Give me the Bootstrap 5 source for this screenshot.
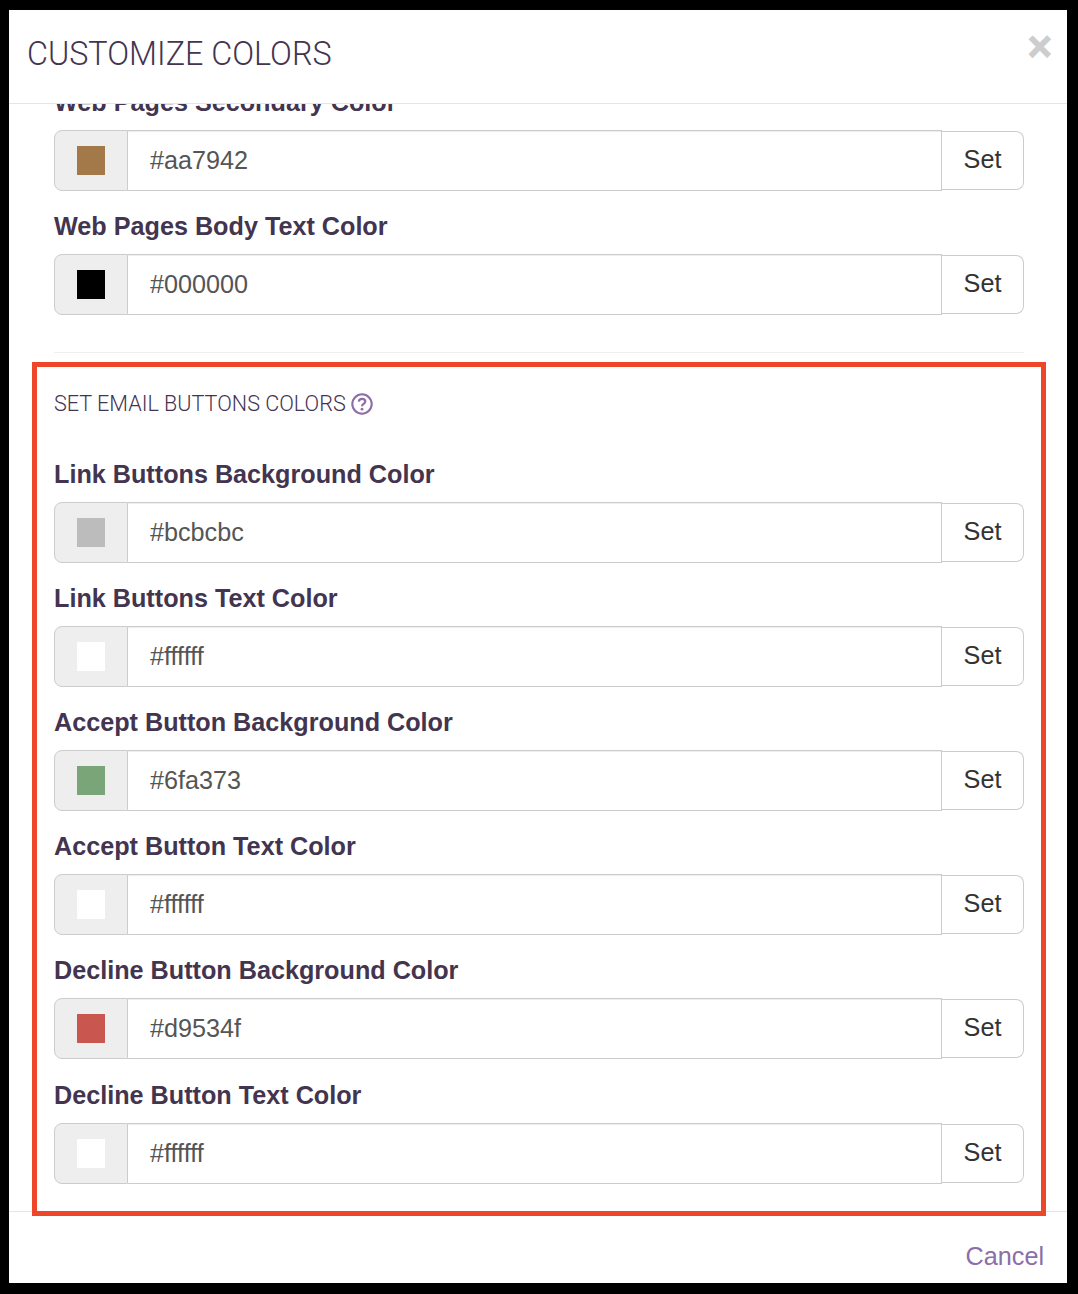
<!DOCTYPE html>
<html lang="en">
<head>
<meta charset="utf-8">
<title>Customize Colors</title>
<link rel="stylesheet" href="https://cdn.jsdelivr.net/npm/bootstrap@5.3.0/dist/css/bootstrap.min.css">
<style>
html,body{height:100%;}
body{background:#000;padding:10px 11px 11px 9px;font-family:"Liberation Sans",Arial,sans-serif;color:#40304d;overflow:hidden;}
.sheet{position:relative;height:1273px;background:#fff;display:flex;flex-direction:column;}
.sheet-head{height:94px;flex:none;border-bottom:1px solid #e5e5e5;padding:0 15px 0 18px;}
.sheet-title{font:300 32.3px/1 Roboto,sans-serif;color:#43344f;margin:27.5px 0 0;}
.shut{border:0;background:none;padding:0;font:700 42px/1 "Liberation Sans",sans-serif;color:#cdcdcd;margin-top:16px;-webkit-text-stroke:1px #cdcdcd;}
.sheet-body{height:1107px;flex:none;overflow:hidden;padding:0 43px 0 45px;}
.scroller{margin-top:-17px;}
.pick-label{font-size:25.2px;font-weight:700;line-height:30px;color:#43344f;margin:0;height:43px;}
.pick-group{height:61px;margin-bottom:20px;flex-wrap:nowrap;align-items:flex-start;}
.pick-group.pick-wide{margin-bottom:21px;}
.pick-group .input-group-text{width:74px;height:61px;background:#eee;border:1px solid #ccc;border-radius:8px 0 0 8px;padding:0;justify-content:center;}
.chip{width:28px;height:29px;display:block;margin-right:1px;}
.pick-group .form-control{height:61px;border:1px solid #ccc;border-left:0;border-radius:0;font-size:25.2px;color:#555;padding:0 22px;box-shadow:inset 0 1px 1px rgba(0,0,0,.075);margin-left:0!important;}
.pick-group .btn{height:59px;width:82px;flex:none;font-size:25.2px;color:#333;background:#fff;border:1px solid #ccc;border-left:0;border-radius:0 8px 8px 0;padding:0 0 2px;margin:1px 0 0 0!important;}
.pick-rule{margin:37px 0 0;border-top:1px solid #eee;opacity:1;}
.pick-title{font:300 21.6px/26px Roboto,sans-serif;color:#43344f;margin:38px 0 42px;display:flex;align-items:center;gap:5px;}
.hint{width:22px;height:22px;flex:none;}
.sheet-foot{flex:1;border-top:1px solid #e5e5e5;display:flex;justify-content:flex-end;align-items:flex-start;padding:29px 23px 0 0;}
.sheet-foot a{font-size:25.2px;line-height:30px;color:#8c6ea8;text-decoration:none;}
.callout{position:absolute;left:23px;top:352px;width:1014px;height:854px;border:5px solid #ee4628;pointer-events:none;}
</style>
</head>
<body>
<div class="sheet">
  <div class="sheet-head d-flex justify-content-between align-items-start">
    <h4 class="sheet-title">CUSTOMIZE COLORS</h4>
    <button type="button" class="shut" aria-label="Close">×</button>
  </div>
  <div class="sheet-body">
    <div class="scroller">
      <div class="pick-label">Web Pages Secondary Color</div>
      <div class="input-group pick-group"><span class="input-group-text"><span class="chip" style="background:#a3794a"></span></span><input class="form-control" value="#aa7942"><button class="btn" type="button">Set</button></div>
      <div class="pick-label">Web Pages Body Text Color</div>
      <div class="input-group pick-group"><span class="input-group-text"><span class="chip" style="background:#000000"></span></span><input class="form-control" value="#000000"><button class="btn" type="button">Set</button></div>
      <hr class="pick-rule">
      <div class="pick-title">SET EMAIL BUTTONS COLORS
        <svg class="hint" viewBox="0 0 22 22" fill="none"><circle cx="11" cy="11" r="9.7" stroke="#8c6ea8" stroke-width="2.1"/><path d="M7.8 8.7a3.2 3.2 0 0 1 3.2-2.8c1.9 0 3.3 1.2 3.3 2.7 0 2.3-3.3 2.4-3.3 4.7" stroke="#8c6ea8" stroke-width="2.2"/><circle cx="11" cy="16.2" r="1.4" fill="#8c6ea8"/></svg>
      </div>
      <div class="pick-label">Link Buttons Background Color</div>
      <div class="input-group pick-group"><span class="input-group-text"><span class="chip" style="background:#bcbcbc"></span></span><input class="form-control" value="#bcbcbc"><button class="btn" type="button">Set</button></div>
      <div class="pick-label">Link Buttons Text Color</div>
      <div class="input-group pick-group"><span class="input-group-text"><span class="chip" style="background:#ffffff"></span></span><input class="form-control" value="#ffffff"><button class="btn" type="button">Set</button></div>
      <div class="pick-label">Accept Button Background Color</div>
      <div class="input-group pick-group"><span class="input-group-text"><span class="chip" style="background:#7aa578"></span></span><input class="form-control" value="#6fa373"><button class="btn" type="button">Set</button></div>
      <div class="pick-label">Accept Button Text Color</div>
      <div class="input-group pick-group"><span class="input-group-text"><span class="chip" style="background:#ffffff"></span></span><input class="form-control" value="#ffffff"><button class="btn" type="button">Set</button></div>
      <div class="pick-label">Decline Button Background Color</div>
      <div class="input-group pick-group pick-wide"><span class="input-group-text"><span class="chip" style="background:#c9574f"></span></span><input class="form-control" value="#d9534f"><button class="btn" type="button">Set</button></div>
      <div class="pick-label">Decline Button Text Color</div>
      <div class="input-group pick-group"><span class="input-group-text"><span class="chip" style="background:#ffffff"></span></span><input class="form-control" value="#ffffff"><button class="btn" type="button">Set</button></div>
    </div>
  </div>
  <div class="sheet-foot"><a href="#">Cancel</a></div>
  <div class="callout"></div>
</div>
<script src="https://cdn.jsdelivr.net/npm/bootstrap@5.3.0/dist/js/bootstrap.bundle.min.js"></script>
</body>
</html>
